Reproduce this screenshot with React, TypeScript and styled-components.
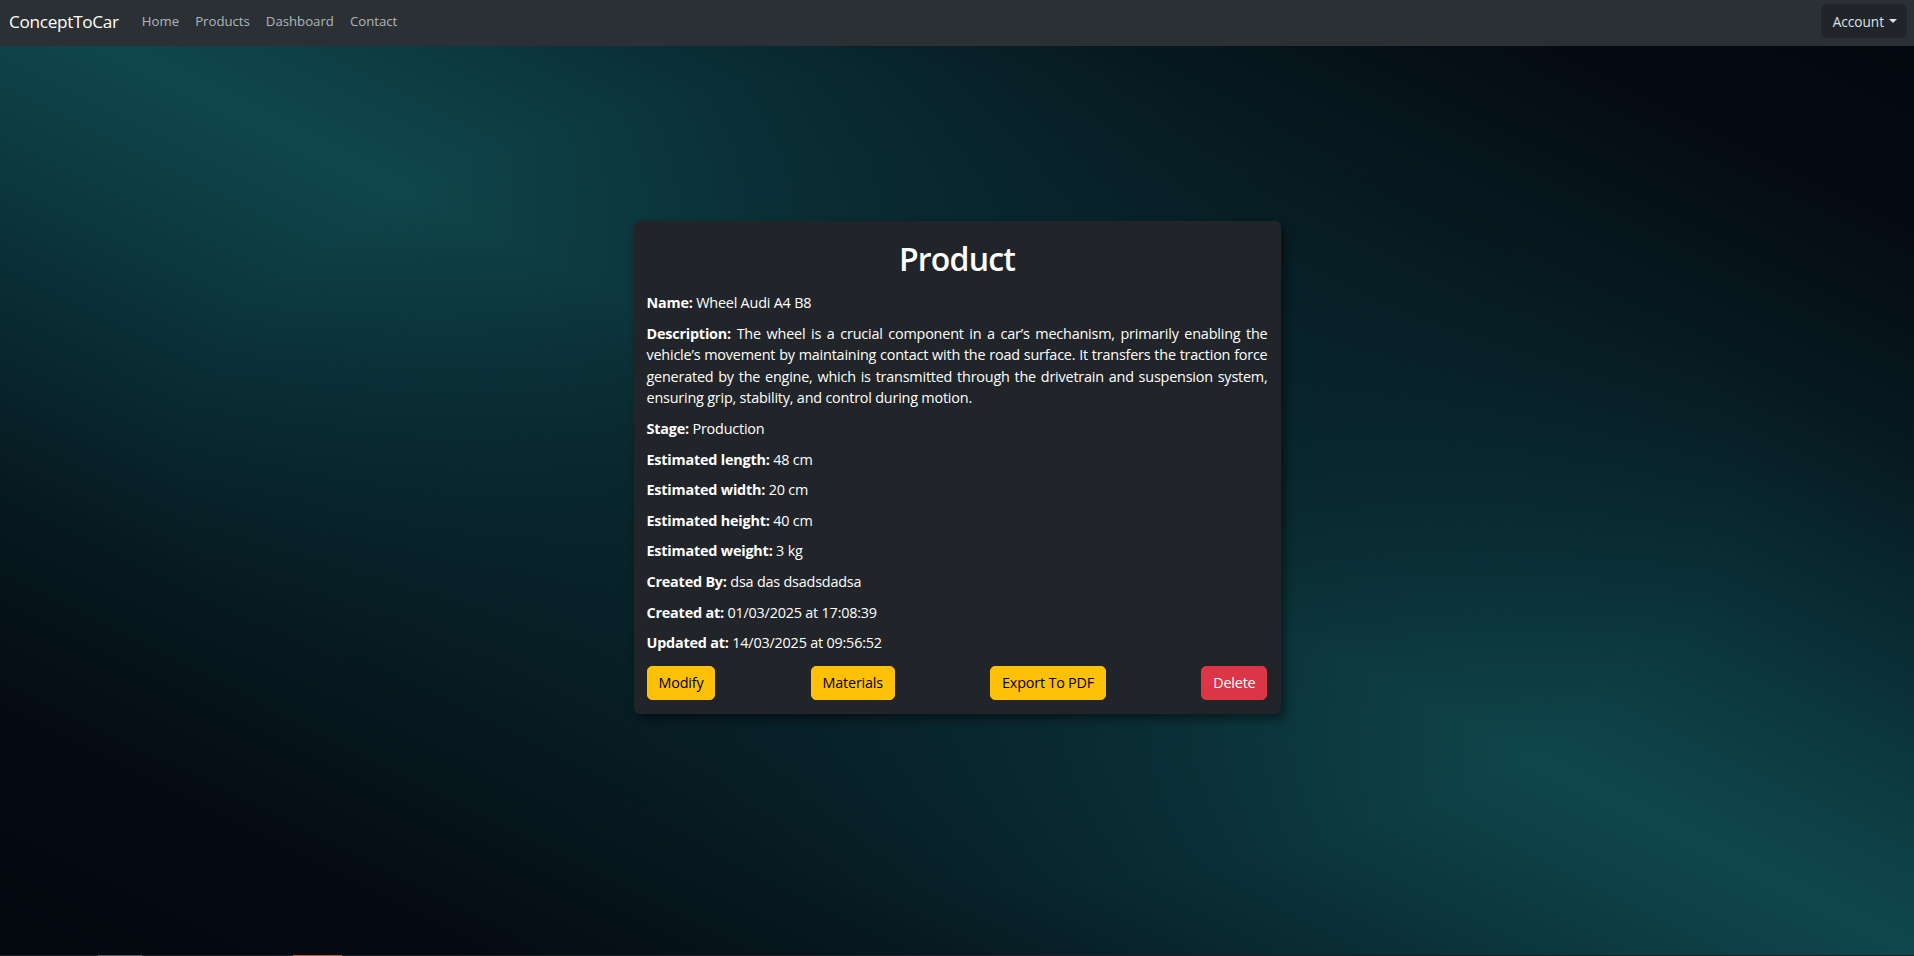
import React from 'react';
import styled, { createGlobalStyle } from 'styled-components';

const GlobalStyle = createGlobalStyle`
  * {
    box-sizing: border-box;
  }

  body {
    margin: 0;
    font-family: 'Open Sans', 'Noto Sans', sans-serif;
    color: #dee2e6;
    background: #050a12;
  }
`;

// one diagonal teal streak through the page centre, dimmed behind the card
const Page = styled.div`
  position: relative;
  min-height: 956px;
  display: flex;
  flex-direction: column;
  background:
    radial-gradient(ellipse 780px 410px at 960px 478px, rgba(5, 10, 18, 0.68), rgba(5, 10, 18, 0) 100%),
    linear-gradient(
      206.6deg,
      #04080f 0%,
      #050b13 12%,
      #071a21 24%,
      #0a2e35 35%,
      #0d3f45 44%,
      #0f474c 49.5%,
      #0d3f45 55%,
      #0a2e35 64%,
      #071a21 75%,
      #050b13 87%,
      #04080f 100%
    );
  overflow: hidden;
`;

const Navbar = styled.nav`
  height: 46px;
  background-color: #2b3035;
  display: flex;
  align-items: center;
  padding: 0 7px 4px 9px;
`;

const Brand = styled.a`
  font-size: 17.2px;
  color: #fff;
  margin-right: 15px;
  text-decoration: none;
  letter-spacing: -0.3px;
`;

const NavLinks = styled.div`
  display: flex;
  flex: 1;
`;

const NavLink = styled.a`
  font-size: 13.2px;
  color: rgba(222, 226, 230, 0.75);
  padding: 8px;
  text-decoration: none;
`;

const AccountButton = styled.button`
  height: 34px;
  padding: 0 10px 0 12px;
  border: none;
  border-radius: 6px;
  background-color: #212529;
  color: #dee2e6;
  font-family: inherit;
  font-size: 13.6px;
  display: flex;
  align-items: center;
  gap: 5px;

  &::after {
    content: '';
    border-top: 4px solid #dee2e6;
    border-left: 4px solid transparent;
    border-right: 4px solid transparent;
  }
`;

const Main = styled.main`
  display: flex;
  justify-content: center;
  padding-top: 175px;
  flex: 1;
`;

const Card = styled.section`
  width: 647px;
  height: 493px;
  background-color: #212529;
  border-radius: 6px;
  padding: 15px 13px 13px 13px;
  box-shadow: 4px 5px 10px rgba(0, 0, 0, 0.45);
  color: #fff;
`;

const Title = styled.h1`
  margin: 0 0 10px;
  text-align: center;
  font-size: 32px;
  line-height: 46px;
  font-weight: 600;
  letter-spacing: -0.8px;
`;

const Row = styled.p<{ $justify?: boolean }>`
  margin: 0 0 9px;
  font-size: 14.4px;
  line-height: 21.6px;
  text-align: ${({ $justify }) => ($justify ? 'justify' : 'left')};
  letter-spacing: -0.2px;
`;

const Label = styled.b`
  font-weight: 700;
`;

const Actions = styled.div`
  display: flex;
  justify-content: space-between;
  margin-top: 12px;
`;

const ActionButton = styled.button<{ $variant: 'warning' | 'danger' }>`
  height: 34px;
  padding: 0 11px;
  border: 1px solid ${({ $variant }) => ($variant === 'danger' ? '#dc3545' : '#ffc107')};
  border-radius: 5px;
  background-color: ${({ $variant }) => ($variant === 'danger' ? '#dc3545' : '#ffc107')};
  color: ${({ $variant }) => ($variant === 'danger' ? '#fff' : '#000')};
  font-family: inherit;
  font-size: 14.4px;
  letter-spacing: -0.2px;
  cursor: pointer;
`;

const BottomStrip = styled.div`
  position: absolute;
  left: 0;
  right: 0;
  bottom: 0;
  height: 1px;
  background: #1c1f23;
`;

const StripSegment = styled.span<{ $left: number; $width: number; $color: string }>`
  position: absolute;
  top: 0;
  height: 1px;
  left: ${({ $left }) => $left}px;
  width: ${({ $width }) => $width}px;
  background: ${({ $color }) => $color};
`;

const details: [string, string][] = [
  ['Stage', 'Production'],
  ['Estimated length', '48 cm'],
  ['Estimated width', '20 cm'],
  ['Estimated height', '40 cm'],
  ['Estimated weight', '3 kg'],
  ['Created By', 'dsa das dsadsdadsa'],
  ['Created at', '01/03/2025 at 17:08:39'],
  ['Updated at', '14/03/2025 at 09:56:52'],
];

const description =
  'The wheel is a crucial component in a car’s mechanism, primarily enabling the vehicle’s movement by ' +
  'maintaining contact with the road surface. It transfers the traction force generated by the engine, ' +
  'which is transmitted through the drivetrain and suspension system, ensuring grip, stability, and ' +
  'control during motion.';

const App: React.FC = () => {
  return (
    <Page>
      <GlobalStyle />
      <Navbar>
        <Brand href="#">ConceptToCar</Brand>
        <NavLinks>
          <NavLink href="#">Home</NavLink>
          <NavLink href="#">Products</NavLink>
          <NavLink href="#">Dashboard</NavLink>
          <NavLink href="#">Contact</NavLink>
        </NavLinks>
        <AccountButton>Account</AccountButton>
      </Navbar>
      <Main>
        <Card>
          <Title>Product</Title>
          <Row>
            <Label>Name: </Label>Wheel Audi A4 B8
          </Row>
          <Row $justify>
            <Label>Description: </Label>{description}
          </Row>
          {details.map(([label, value]) => (
            <Row key={label}>
              <Label>{label}: </Label>{value}
            </Row>
          ))}
          <Actions>
            <ActionButton $variant="warning">Modify</ActionButton>
            <ActionButton $variant="warning">Materials</ActionButton>
            <ActionButton $variant="warning">Export To PDF</ActionButton>
            <ActionButton $variant="danger">Delete</ActionButton>
          </Actions>
        </Card>
      </Main>
      <BottomStrip>
        <StripSegment $left={98} $width={44} $color="#55595d" />
        <StripSegment $left={293} $width={49} $color="#b8622a" />
      </BottomStrip>
    </Page>
  );
};

export default App;
